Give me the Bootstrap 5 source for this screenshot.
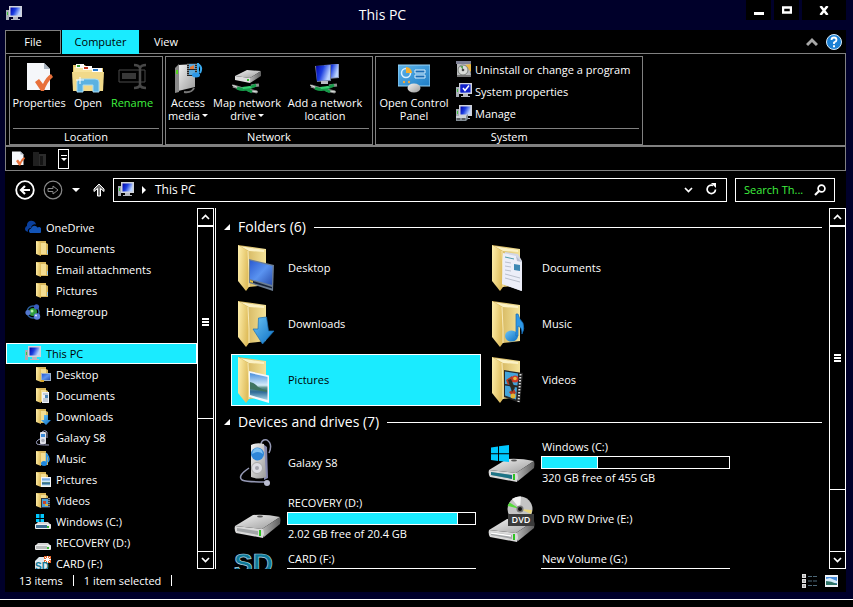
<!DOCTYPE html>
<html lang="en">
<head>
<meta charset="utf-8">
<meta name="viewport" content="width=device-width, initial-scale=1">
<title>This PC</title>
<link href="https://cdn.jsdelivr.net/npm/bootstrap@5.3.0/dist/css/bootstrap.min.css" rel="stylesheet">
<style>
:root { --hc-cyan:#1aebff; --hc-green:#3ff23f; --hc-gray:#808080; --hc-navy:#00002a; }
body { background:#000; color:#fff; font-family:"Open Sans","Noto Sans",sans-serif; font-size:11px; line-height:16px; }
svg { display:block; flex:none; }
a { color:inherit; text-decoration:none; }
.btn { --bs-btn-padding-x:0; --bs-btn-padding-y:0; --bs-btn-font-size:11px; --bs-btn-line-height:13px; --bs-btn-color:#fff; --bs-btn-hover-color:var(--hc-cyan); --bs-btn-border-width:0; --bs-btn-border-radius:0; --bs-btn-active-color:var(--hc-cyan); }
.i16 { width:16px; height:16px; }
.i32 { width:32px; height:32px; }
.i48 { width:48px; height:48px; }
.window-frame { background:var(--hc-navy); padding:0 7px 7px 5px; border-bottom:1px solid #fff; margin-bottom:7px; }
.title-bar { height:30px; }
.title-icon { margin:6px 0 0 1px; }
.title-text { font-size:14px; }
.caption-btn.btn { background:#000; width:25px; height:20px; margin-left:3px; display:flex; align-items:center; justify-content:center; }
.caption-btn.caption-close { width:44px; }
.tab-strip { height:24px; background:#000; }
.tab-strip .btn { height:24px; padding:0 15px; line-height:22px; }
.tab-strip .file-tab { border:1px solid var(--hc-gray); width:56px; }
.tab-strip .on-tab { background:var(--hc-cyan); color:#000; width:77px; padding:0; margin-left:1px; }
.tab-rest { border-bottom:1px solid var(--hc-gray); }
.ribbon { background:#000; border:1px solid var(--hc-gray); border-top:0; border-bottom-width:2px; padding:2px 3px 0; }
.ribbon-group { border:1px solid var(--hc-gray); padding:1px 2px 0; margin-right:2px; }
.ribbon-body { height:70px; gap:2px; padding-right:6px; }
.ribbon-caption { border-top:1px solid var(--hc-gray); line-height:15px; text-align:center; margin:0 1px; }
.big-cmd.btn { display:flex; flex-direction:column; align-items:center; width:54px; white-space:nowrap; padding-top:4px; }
.big-cmd svg { margin-bottom:2px; }
.w-media.btn { width:40px; } .w-map.btn { width:74px; } .w-add.btn { width:78px; } .w-panel.btn { width:72px; } .w-open.btn { width:40px; } .w-ren.btn { width:44px; }
.dim-cmd.btn { color:var(--hc-green); }
.small-cmd.btn { display:flex; align-items:center; gap:3px; height:22px; white-space:nowrap; }
.caret-dn { display:inline-block; border:3px solid transparent; border-top-color:currentColor; border-bottom:0; vertical-align:3px; margin-left:2px; }
.quick-bar { background:#000; border:1px solid var(--hc-gray); border-top:0; height:24px; padding:0 4px; gap:6px; }
.quick-drop.btn { border:1px solid #fff; width:11px; height:20px; margin-left:4px; display:flex; align-items:center; justify-content:center; }
.nav-row { background:#000; height:37px; padding:0 11px 0 10px; }
.field-box { border:1px solid #fff; height:24px; background:#000; }
.address-text { font-size:12px; }
.search-box { width:100px; padding:0 8px; }
.search-box input { min-width:0; width:70px; background:none; border:0; color:var(--hc-green); padding:0; outline:0; }
.search-box input::placeholder { color:var(--hc-green); opacity:1; }
.panes { background:#000; flex:1 1 0; min-height:0; }
.tree-pane { width:192px; overflow:hidden; padding:9px 0 0 1px; }
.tree-pane .list-group-item { background:none; color:#fff; border:1px solid transparent; border-radius:0; height:21px; padding:0 0 0 18px; gap:5px; display:flex; align-items:center; white-space:nowrap; flex:none; }
.tree-pane .tree-sub { padding-left:28px; }
.tree-pane .tree-gap { height:21px; }
.tree-pane .tree-on { background:var(--hc-cyan); color:#000; border-color:#fff; }
.scroller { width:17px; border:1px solid #fff; }
.scroller .btn { height:16px; display:flex; align-items:center; justify-content:center; }
.scroll-thumb { border:solid #fff; border-width:2px 0 1px; display:flex; align-items:center; justify-content:center; }
.scroll-room { border-bottom:1px solid #fff; }
.tree-scroll .scroll-thumb { flex:59; } .tree-scroll .scroll-room { flex:41; }
.file-scroll .scroll-thumb { flex:81; } .file-scroll .scroll-room { flex:19; }
.file-pane { border-left:1px solid #fff; margin-left:1px; min-width:0; overflow:hidden; padding:7px 7px 0 8px; }
.group-head { font-size:14px; line-height:24px; gap:8px; margin:0; font-weight:400; }
.group-head::after { content:""; flex:1; height:1px; background:#fff; }
.tile-set { display:flex; flex-wrap:wrap; gap:4px; padding:3px 0 4px 7px; }
.file-tile { width:250px; height:52px; border:1px solid transparent; padding:1px 4px 1px 1px; display:flex; align-items:center; gap:6px; }
.tile-on { background:var(--hc-cyan); border-color:#fff; color:#000; }
.tile-info { flex:1; min-width:0; line-height:15px; margin-bottom:2px; }
.tile-info > span { padding-left:1px; }
.tile-info .progress { --bs-progress-height:13px; --bs-progress-bg:#000; --bs-progress-border-radius:0; border:1px solid #fff; margin:2px 0 1px; }
.tile-info .progress-bar { background:var(--hc-cyan); border-right:1px solid #fff; }
.status-bar { background:#000; height:23px; padding:0 8px 0 14px; }
.status-bar .status-cell { border-right:1px solid #fff; line-height:11px; padding-right:10px; margin-right:10px; }
</style>
<script src="https://cdn.jsdelivr.net/npm/bootstrap@5.3.0/dist/js/bootstrap.bundle.min.js"></script>
</head>
<body>
<svg class="position-absolute" width="0" height="0" aria-hidden="true">
<defs>
<linearGradient id="gFlap" x1="0" x2="1" y2=".3"><stop offset="0" stop-color="#fff0ae"/><stop offset="1" stop-color="#dfbd5c"/></linearGradient>
<linearGradient id="gBack" x1="0" x2="1"><stop offset="0" stop-color="#c9a548"/><stop offset="1" stop-color="#f4e39a"/></linearGradient>
<linearGradient id="gBlue" x1="0" y1="0" x2="1" y2="1"><stop offset="0" stop-color="#2c5bd0"/><stop offset=".5" stop-color="#5a93f0"/><stop offset="1" stop-color="#2a4fae"/></linearGradient>
<linearGradient id="gArrow" x1="0" x2="1" y2="1"><stop offset="0" stop-color="#6cc4f5"/><stop offset="1" stop-color="#0b6fc4"/></linearGradient>
<linearGradient id="gScreen" x1="0" x2="1" y2=".4"><stop offset="0" stop-color="#0000a8"/><stop offset=".5" stop-color="#1c3fe0"/><stop offset="1" stop-color="#b9d2ff"/></linearGradient>
<linearGradient id="gMetal" x1="0" x2="1" y2="1"><stop offset="0" stop-color="#f4f4f4"/><stop offset="1" stop-color="#9b9b9b"/></linearGradient>
<linearGradient id="gSide" x1="0" x2="1"><stop offset="0" stop-color="#b8b8b8"/><stop offset="1" stop-color="#5e5e5e"/></linearGradient>
<linearGradient id="gPhoto" x2="0" y2="1"><stop offset="0" stop-color="#4a8edc"/><stop offset=".45" stop-color="#d4ecfa"/><stop offset=".55" stop-color="#5d8f88"/><stop offset=".7" stop-color="#2d6a96"/><stop offset="1" stop-color="#a8d4e6"/></linearGradient>
<linearGradient id="gPanel" x1="0" x2="1" y2="1"><stop offset="0" stop-color="#5fb6ec"/><stop offset="1" stop-color="#1e7cc4"/></linearGradient>
</defs>
<symbol id="pc" viewBox="0 0 16 16"><path d="M0 4h3v10H0z" fill="#a8aeb8"/><path d="M1 6h1v3H1z" fill="#3fc43f"/><path d="M3 0h13v11H3z" fill="#d0d3da"/><path d="M4.500 1.500h10v8h-10z" fill="url(#gScreen)"/><path d="M7 11h5v2h2v1H5v-1h2z" fill="#b7bac2"/></symbol>
<symbol id="sheet" viewBox="0 0 32 32"><path d="M4 1h17l6 6v21H4z" fill="#f5f7fa"/><path d="M21 1v6h6z" fill="#a9b4c0"/><path d="M12 20l4-3 4 5q3-7 8-10l2 3q-6 5-9 14h-3z" fill="#e8703a"/></symbol>
<symbol id="openf" viewBox="0 0 32 32"><path d="M1 3h12l2 3h16v23H1z" fill="#e4c76a"/><path d="M2 5h10l2 2h8l1 2h8v19H2z" fill="#f8e49c"/><path d="M4 2h8v4H4z" fill="#fff"/><path d="M5 3h3v2H5z" fill="#3ca03c"/><path d="M11 4h9v4h-9z" fill="#fff"/><path d="M12 5h4v2h-4z" fill="#c83a20"/><path d="M20 6h10v4H20z" fill="#fff"/><path d="M21 7h5v2h-5z" fill="#2878c8"/><path d="M0 10h32l-1 19H1z" fill="#f1d98a"/><path d="M5 30V20q0-3 4-3h14q4 0 4 3v10h-6v-7H11v7z" fill="#5bb2e2" stroke="#a8dbf5"/><path d="M8 15v7M4 18h8" stroke="#fff"/></symbol>
<symbol id="rename" viewBox="0 0 32 32"><path d="M3 8h26v12H3z" fill="none" stroke="#4a4a4a"/><path d="M6 11h14v6H6z" fill="#383838"/><path d="M18 3q5 0 6 3 1-3 6-3M24 5v20M18 26q5 0 6-3 1 3 6 3" fill="none" stroke="#484848" stroke-width="2.500"/></symbol>
<symbol id="media" viewBox="0 0 32 32"><path d="M6 3l17-1v23L6 29z" fill="url(#gMetal)"/><path d="M3 6l4-4v28l-4 1z" fill="#8a8a8a"/><path d="M4 8h2v4H4z" fill="#56d420"/><path d="M12 30q8 1 10-4" fill="none" stroke="#777" stroke-width="2"/><path d="M15 1h10v13H15z" fill="#222"/><path d="M17 2h6v5h-6zM17 8h6v5h-6z" fill="#5aa9dd"/><path d="M18 5l4-2v4h-4z" fill="#e27a3c"/><path d="M16 2v12M24 2v12" stroke="#ddd" stroke-dasharray="1 1"/><path d="M26 1v11M26 2q5 3 2 9" fill="none" stroke="#3aa9ee" stroke-width="2"/><ellipse cx="24" cy="13" rx="4" ry="2.500" fill="#2c98e8"/></symbol>
<symbol id="cable" viewBox="0 0 32 32"><path d="M2 24l10 3M20 24l8-1M17 28l9 2" stroke="#8e9290" stroke-width="3"/><path d="M1 23l7 3M20 29l7 1" stroke="#d9dbda"/><path d="M6 26q7 3 12 0l7-3M13 26l8 4" fill="none" stroke="#159a48" stroke-width="3"/><path d="M11 25l8-1 2 2-9 1z" fill="#35d070"/></symbol>
<symbol id="mapdrive" viewBox="0 0 32 32"><use href="#cable"/><path d="M4 14l12-6 14 1-11 7z" fill="url(#gMetal)"/><path d="M4 14l15 2v5L4 18z" fill="#dedede"/><path d="M19 16l11-7v5l-11 7z" fill="url(#gSide)"/><path d="M16 17h2v2h-2z" fill="#38c030"/></symbol>
<symbol id="addnet" viewBox="0 0 32 32"><use href="#cable"/><path d="M15 3l15-1v14l-12 1z" fill="#8e98b8"/><path d="M17 3l12-1v13l-10 1z" fill="url(#gScreen)"/><path d="M6 4l16-1v16l-14 1z" fill="#7680a0"/><path d="M7 4l14-1v15l-13 1z" fill="url(#gScreen)"/><path d="M12 19h7v3h-7z" fill="#b8bbc2"/></symbol>
<symbol id="cpanel" viewBox="0 0 32 32"><path d="M0 3h32v21H0z" fill="url(#gPanel)" stroke="#9bd4f6"/><circle cx="8" cy="11" r="4.500" fill="none" stroke="#d8f0ff" stroke-width="1.500"/><path d="M8 11V5a6 6 0 0 1 6 6z" fill="#f5b030"/><path d="M17 8h10v3H17zM17 13h10v3H17z" fill="#1b6cb4" stroke="#d8f0ff"/><circle cx="6" cy="20" r="1.200" fill="#f6a83c"/><circle cx="11" cy="20" r="1.200" fill="#f6a83c"/><ellipse cx="16" cy="26" rx="6.500" ry="4.500" fill="url(#gMetal)"/></symbol>
<symbol id="uninst" viewBox="0 0 16 16"><path d="M1 2h13l1 13H1z" fill="#b9bbbd"/><path d="M0 0h15v3H0z" fill="#7d8094"/><path d="M9 4l6-1v8z" fill="#e8b742"/><circle cx="7" cy="9" r="5" fill="#d9dcd9" stroke="#7c807c"/><path d="M7 9l-3-4h3z" fill="#58a058"/><circle cx="7" cy="9" r="1.300" fill="#444"/><path d="M1 14h14v2H1z" fill="#777"/></symbol>
<symbol id="sysprop" viewBox="0 0 16 16"><use href="#pc"/><path d="M4.500 1.500h10v8h-10z" fill="#1020c8"/><path d="M7 5l2 2.500 4-5" fill="none" stroke="#fff" stroke-width="1.500"/></symbol>
<symbol id="manage" viewBox="0 0 16 16"><use href="#pc"/><path d="M0 11h10l2-2v5l-2 2H0z" fill="#838d95"/><path d="M0 11h10v2H0z" fill="#cdd3d8"/><path d="M1 14h3M6 14h3" stroke="#333"/></symbol>
<symbol id="gray-folder" viewBox="0 0 16 16"><path d="M1 1h6v14H1z" fill="#202020"/><path d="M7 3h7v12H7z" fill="#2c2c2c"/><path d="M8 5h3v9H8z" fill="#151515"/></symbol>
<symbol id="sfolder" viewBox="0 0 16 16"><path d="M1 0h10v2l2 1v11H5z" fill="#d8b65a"/><path d="M6 2h5v11H6z" fill="#f3dd92"/><path d="M1 0l5 2v13l-5-2z" fill="url(#gFlap)"/></symbol>
<symbol id="f-plain" viewBox="0 0 16 16"><use href="#sfolder"/><path d="M12 9h1v4h-1z" fill="#8fc8ef"/></symbol>
<symbol id="f-desk" viewBox="0 0 16 16"><use href="#sfolder"/><path d="M6 6h10v8H6z" fill="#9fb2c8"/><path d="M7 7h8v6H7z" fill="url(#gBlue)"/><path d="M6 13h3v2H6z" fill="#d4a52e"/></symbol>
<symbol id="f-docs" viewBox="0 0 16 16"><use href="#sfolder"/><path d="M7 4h7v11H7z" fill="#eef2f8"/><path d="M8 6h5M8 11h5M8 13h5" stroke="#9aa6b8"/><path d="M10 7h3v3h-3z" fill="#4a86b8"/></symbol>
<symbol id="f-down" viewBox="0 0 16 16"><use href="#sfolder"/><path d="M9 6h4v5h3l-5 5-5-5h3z" fill="url(#gArrow)"/></symbol>
<symbol id="f-music" viewBox="0 0 16 16"><use href="#sfolder"/><ellipse cx="9" cy="12.500" rx="3" ry="2.500" fill="#1e88e0"/><path d="M11.500 13V3q4 4 1.500 8" fill="none" stroke="#2a94e8" stroke-width="1.500"/></symbol>
<symbol id="f-pics" viewBox="0 0 16 16"><use href="#sfolder"/><path d="M6 5h10v10H6z" fill="#f4f6f8"/><path d="M7 6.500h8v7H7z" fill="url(#gPhoto)"/></symbol>
<symbol id="f-vids" viewBox="0 0 16 16"><use href="#sfolder"/><path d="M6 5h9v10H6z" fill="#2a3440"/><path d="M7 6h6v8H7z" fill="#4aa0d8"/><path d="M8 8h3v3H8z" fill="#c8452c"/><path d="M10 11h3v2h-3z" fill="#e0b23a"/><path d="M14 5v10" stroke="#ccc" stroke-dasharray="1 1"/></symbol>
<symbol id="cloud" viewBox="0 0 16 16"><path d="M1 11a3 3 0 0 1 1-5 4.500 4.500 0 0 1 9-1.500A4 4 0 0 0 6 8a3 3 0 0 0-3 4z" fill="#0a3f9c"/><path d="M5 13a2.500 2.500 0 0 1 1-4.500 3.500 3.500 0 0 1 6.500-1A3 3 0 0 1 15 13z" fill="#1254b8"/></symbol>
<symbol id="homegrp" viewBox="0 0 16 16"><circle cx="8" cy="8" r="6" fill="none" stroke="#2b5d9a" stroke-width="1.500"/><circle cx="8" cy="8" r="4" fill="#2e9b3c"/><circle cx="7" cy="7" r="1.500" fill="#b3efa9"/><circle cx="3" cy="8.500" r="2.600" fill="#5377cf"/><circle cx="11.500" cy="2.800" r="2.600" fill="#3a5fc0"/><circle cx="12" cy="12.500" r="3.200" fill="#5f82dc"/><circle cx="11" cy="11.500" r="1" fill="#dfe8ff"/></symbol>
<symbol id="sphone" viewBox="0 0 16 16"><path d="M7 2q3-3 5 0v6M5 9q-5 2-3 5 2 1 12 1" fill="none" stroke="#a3a7c8"/><rect x="5" y="2" width="6" height="12" rx="1" fill="#dfe1ea"/><path d="M6 4h4v3H6z" fill="#3a8ad8"/><circle cx="8" cy="10.500" r="1.800" fill="#a9adb8"/></symbol>
<symbol id="sdrive" viewBox="0 0 16 16"><path d="M0 11l3-3h10l3 3z" fill="#d6d6d6"/><rect y="10" width="16" height="5" rx="1" fill="#eee"/><path d="M1 11h11v3H1z" fill="#b9bcbc"/><path d="M12 12h2v2h-2z" fill="#35b92e"/></symbol>
<symbol id="swin" viewBox="0 0 16 16"><use href="#sdrive"/><path d="M1 11h11v3H1z" fill="#3c6c90"/><path d="M1 0h3.500v4H1zM5.500 0H9v4H5.500zM1 5h3.500v3H1zM5.500 5H9v3H5.500z" fill="#00c8ff"/></symbol>
<symbol id="bfolder" viewBox="0 0 48 48"><path d="M5 1l28 4v36l-17 2-6-8z" fill="url(#gBack)"/><path d="M7 2l24 4v2L16 7z" fill="#fbf1c4"/><path d="M5 1l10 6 1 22v14l-3 4-8-10z" fill="url(#gFlap)"/><path d="M15 7l1 22v14" fill="none" stroke="#fff6cf" stroke-width=".8"/></symbol>
<symbol id="b-desk" viewBox="0 0 48 48"><use href="#bfolder"/><path d="M16 15l25 6-1 26-24-8z" fill="#6c7d92"/><path d="M17 16.500l22.500 5.500-.5 19L17 35z" fill="url(#gBlue)"/><path d="M17 36l22 7v1.500L17 38z" fill="#17243a"/><path d="M17 36l3 1v2l-3-1z" fill="#e2bf3c"/></symbol>
<symbol id="b-docs" viewBox="0 0 48 48"><use href="#bfolder"/><path d="M18 8l13 2 4 7-.5 30L15 40z" fill="#d3d7e6"/><path d="M16 9l13 3 6 6V47l-20-7z" fill="#eceef8"/><path d="M29 12l6 6-5-1z" fill="#b9c0d2"/><path d="M18 13l9 2" stroke="#4a9aa8"/><path d="M18 18l6 1M18 22l6 1M18 26l6 1M18 30l15 4M18 34l15 4" stroke="#b9bfcc"/><path d="M27 20l6 1v6l-6-1z" fill="#3d88b4"/></symbol>
<symbol id="b-down" viewBox="0 0 48 48"><use href="#bfolder"/><path d="M25.500 18l8-1 2 14H41L29.500 44 20 29h5z" fill="url(#gArrow)" stroke="#1a70b4" stroke-width=".7"/></symbol>
<symbol id="b-music" viewBox="0 0 48 48"><use href="#bfolder"/><ellipse cx="24.500" cy="36" rx="6.500" ry="5.500" fill="url(#gArrow)"/><path d="M29 36V14h2q1 5 5 9 2 6-1 11 0-7-4-8v10z" fill="#2e98e6" stroke="#1568b2" stroke-width=".7"/></symbol>
<symbol id="b-pics" viewBox="0 0 48 48"><use href="#bfolder"/><path d="M16 15l20 4.500V47l-20-6z" fill="#f4f7fa"/><path d="M17 17l17.500 4v23L17 39z" fill="url(#gPhoto)"/><path d="M17 26q5 1 8 5 5 3 9 3v2l-17-3z" fill="#3f7461"/></symbol>
<symbol id="b-vids" viewBox="0 0 48 48"><use href="#bfolder"/><path d="M17 14l19 3-3 30-16-6z" fill="#262626"/><path d="M18 15.500l13 2-.5 12L18 28zM18 29.500l12 2-1 12-11-4z" fill="#44a4da"/><circle cx="28" cy="23" r="3.500" fill="#cf3a28"/><circle cx="28" cy="22.500" r="1.800" fill="#e9b93c"/><path d="M19 24l6-4 1 6-5 3zM22 36l5-3 2 4-4 3z" fill="#b53a22"/><path d="M21 24l3-1 4 9-3 4z" fill="#2a2a20"/><circle cx="26" cy="40" r="2.500" fill="#e6b534"/><path d="M33.500 18l-2 28" stroke="#ddd" stroke-width="2" stroke-dasharray="1.500 1.500"/></symbol>
<symbol id="b-phone" viewBox="0 0 48 48"><path d="M28 5q1-5 6-4 6 4 2 13M16 29q-12 8-7 12 5 2 23 2" fill="none" stroke="#9498b4" stroke-width="1.500"/><path d="M30 5l4 3 1 31-4 2z" fill="#8589b0"/><path d="M18 6q6-3 13-1l2 33q-7 3-15 0z" fill="url(#gMetal)"/><ellipse cx="24.500" cy="15" rx="6.500" ry="6.500" fill="#2e86d8"/><path d="M19 15q6-4 11 0-1-6-5.500-6T19 15z" fill="#7fc1f2"/><circle cx="24" cy="29" r="5.500" fill="#dcdde4" stroke="#aaa"/><circle cx="24" cy="29" r="2" fill="#a2a4ae"/><circle cx="34" cy="44" r="3" fill="#b9bcd0"/></symbol>
<symbol id="bdrive" viewBox="0 0 48 48"><path d="M2 31l18-11q13-1 27 2l-18 12z" fill="url(#gMetal)"/><path d="M29 34l18-12q1 3 0 7L31 42z" fill="url(#gSide)"/><path d="M2 31q-1 4 1 7l27 5q2-4 0-9z" fill="#d9d9d9"/><path d="M4 33l21 3v4L4 36z" fill="#a2a5a7"/><path d="M26 35h2v6h-2z" fill="#2ec322"/><ellipse cx="27" cy="21.500" rx="3" ry="1" fill="#555"/></symbol>
<symbol id="b-win" viewBox="0 0 48 48"><use href="#bdrive"/><path d="M4 33l21 3v4L4 36z" fill="#1d7486"/><path d="M4 8.500l7-1v6.800H4zM12 7.300L22 6v8.300H12zM4 15.300h7V22l-7-1zM12 15.300h10V23l-10-1z" fill="#00c8ff"/></symbol>
<symbol id="b-dvd" viewBox="0 0 48 48"><g transform="translate(0 4)"><use href="#bdrive" width="48" height="48"/></g><path d="M4 38l20 3" stroke="#fff" stroke-width="1.500"/><circle cx="33" cy="14" r="12.500" fill="#c4c4c4"/><path d="M33 14L25 4a13 13 0 0 1 9-2.500z" fill="#f3f3f3"/><path d="M33 14L20.500 11l2-3.500z" fill="#56dc3c"/><path d="M33 14l11 5 1-4z" fill="#ead77c"/><circle cx="33" cy="14" r="3.500" fill="#777"/><circle cx="33" cy="14" r="2" fill="#111"/><path d="M21 19h26v12H21z" fill="#3a3a3a"/></symbol>
<symbol id="up" viewBox="0 0 9 6"><path d="M1 5l3.500-3.500L8 5" fill="none" stroke="#fff" stroke-width="1.700"/></symbol>
<symbol id="down" viewBox="0 0 9 6"><path d="M1 1l3.500 3.500L8 1" fill="none" stroke="#fff" stroke-width="1.700"/></symbol>
<symbol id="grip" viewBox="0 0 7 8"><path d="M0 1h7M0 4h7M0 7h7" stroke="#fff" stroke-width="2"/></symbol>
<symbol id="tri" viewBox="0 0 6 6"><path d="M6 0v6H0z" fill="#fff"/></symbol>
</svg>

<div class="d-flex flex-column vh-100">
<div class="window-frame d-flex flex-column flex-grow-1 overflow-hidden">
  <header class="title-bar d-flex">
    <svg class="i16 title-icon" aria-hidden="true"><use href="#pc"/></svg>
    <div class="title-text flex-grow-1 text-center align-self-center">This PC</div>
    <button class="btn caption-btn" aria-label="Minimize"><svg width="10" height="10"><path d="M0 7h10v3H0z" fill="#fff"/></svg></button>
    <button class="btn caption-btn" aria-label="Maximize"><svg width="10" height="8"><path d="M1 1.500h8v5H1z" fill="none" stroke="#fff" stroke-width="2.500"/></svg></button>
    <button class="btn caption-btn caption-close" aria-label="Close"><svg width="10" height="9"><path d="M1.500 0l7 9M8.500 0l-7 9" stroke="#fff" stroke-width="2.500"/></svg></button>
  </header>

  <nav class="tab-strip d-flex" aria-label="Ribbon tabs">
    <button class="btn file-tab">File</button>
    <button class="btn on-tab">Computer</button>
    <div class="tab-rest flex-grow-1 d-flex align-items-center">
      <button class="btn">View</button>
      <button class="btn ms-auto p-0 me-2" aria-label="Collapse ribbon"><svg width="12" height="10"><path d="M1 8l5-5 5 5" fill="none" stroke="#a8a8a8" stroke-width="3"/></svg></button>
      <button class="btn p-0 me-1" aria-label="Help"><svg width="16" height="16"><circle cx="8" cy="8" r="7.500" fill="#1c80d4" stroke="#d8ecfa"/><path d="M5.500 6q0-2.500 2.500-2.500T10.500 6Q10.500 7.500 8 8.500V10" fill="none" stroke="#fff" stroke-width="1.800"/><path d="M7 11.200h2v2H7z" fill="#fff"/></svg></button>
    </div>
  </nav>

  <section class="ribbon d-flex" aria-label="Computer">
    <div class="ribbon-group">
      <div class="ribbon-body d-flex align-items-start">
        <button class="btn big-cmd"><svg class="i32"><use href="#sheet"/></svg>Properties</button>
        <button class="btn big-cmd w-open"><svg class="i32"><use href="#openf"/></svg>Open</button>
        <button class="btn big-cmd w-ren dim-cmd"><svg class="i32"><use href="#rename"/></svg>Rename</button>
      </div>
      <div class="ribbon-caption">Location</div>
    </div>
    <div class="ribbon-group">
      <div class="ribbon-body d-flex align-items-start">
        <button class="btn big-cmd w-media"><svg class="i32"><use href="#media"/></svg>Access<span>media<span class="caret-dn"></span></span></button>
        <button class="btn big-cmd w-map"><svg class="i32"><use href="#mapdrive"/></svg>Map network<span>drive<span class="caret-dn"></span></span></button>
        <button class="btn big-cmd w-add"><svg class="i32"><use href="#addnet"/></svg>Add a network<span>location</span></button>
      </div>
      <div class="ribbon-caption">Network</div>
    </div>
    <div class="ribbon-group">
      <div class="ribbon-body d-flex align-items-start">
        <button class="btn big-cmd w-panel"><svg class="i32"><use href="#cpanel"/></svg>Open Control<span>Panel</span></button>
        <div class="mx-1">
          <button class="btn small-cmd"><svg class="i16"><use href="#uninst"/></svg>Uninstall or change a program</button>
          <button class="btn small-cmd"><svg class="i16"><use href="#sysprop"/></svg>System properties</button>
          <button class="btn small-cmd"><svg class="i16"><use href="#manage"/></svg>Manage</button>
        </div>
      </div>
      <div class="ribbon-caption">System</div>
    </div>
  </section>

  <div class="quick-bar d-flex align-items-center">
    <button class="btn" aria-label="Properties"><svg class="i16"><use href="#sheet"/></svg></button>
    <button class="btn" aria-label="New folder"><svg class="i16"><use href="#gray-folder"/></svg></button>
    <button class="btn quick-drop" aria-label="Customize toolbar"><svg width="6" height="7"><path d="M0 0h6v1H0zM0 3h6L3 6z" fill="#fff"/></svg></button>
  </div>

  <div class="nav-row d-flex align-items-center">
    <button class="btn" aria-label="Back"><svg width="20" height="20"><circle cx="10" cy="10" r="8.800" fill="none" stroke="#fff" stroke-width="1.800"/><path d="M15 10H6M10 6l-4 4 4 4" fill="none" stroke="#fff" stroke-width="2.200"/></svg></button>
    <button class="btn ms-2" aria-label="Forward"><svg width="20" height="20"><circle cx="10" cy="10" r="8.800" fill="none" stroke="#8a8a8a" stroke-width="1.200"/><path d="M5 8.500h5V6l5 4-5 4v-2.500H5z" fill="none" stroke="#8a8a8a"/></svg></button>
    <button class="btn ms-2" aria-label="Recent locations"><svg width="10" height="6"><path d="M1 1h8L5 5z" fill="#fff"/></svg></button>
    <button class="btn ms-2 me-1" aria-label="Up"><svg class="mx-1" width="12" height="14"><path d="M6 1L1 6v2.500l3.500-3V13h3V5.500l3.500 3V6z" fill="#777" stroke="#fff"/></svg></button>
    <div class="field-box flex-grow-1 d-flex align-items-center px-1">
      <svg class="i16" aria-hidden="true"><use href="#pc"/></svg>
      <svg class="mx-2" width="5" height="8" aria-hidden="true"><path d="M0 0l4 4-4 4z" fill="#fff"/></svg>
      <a href="#" class="address-text flex-grow-1">This PC</a>
      <button class="btn me-2" aria-label="Address history"><svg width="9" height="6"><use href="#down"/></svg></button>
      <button class="btn me-1 ms-1" aria-label="Refresh"><svg width="13" height="13"><path d="M8 2.500a4.200 4.200 0 1 0 2.500 4" fill="none" stroke="#fff" stroke-width="1.700"/><path d="M6 0h5v5z" fill="#fff"/></svg></button>
    </div>
    <div class="field-box search-box d-flex align-items-center justify-content-between ms-2">
      <input type="text" aria-label="Search This PC" placeholder="Search Th...">
      <button class="btn" aria-label="Search"><svg width="12" height="12"><circle cx="7.500" cy="4.500" r="3.400" fill="none" stroke="#fff" stroke-width="1.700"/><path d="M5 7l-4 4" stroke="#fff" stroke-width="2.200"/></svg></button>
    </div>
  </div>

  <main class="panes d-flex">
    <nav class="tree-pane list-group rounded-0 flex-shrink-0" aria-label="Folders">
      <a href="#" class="list-group-item"><svg class="i16"><use href="#cloud"/></svg>OneDrive</a>
      <a href="#" class="list-group-item tree-sub"><svg class="i16"><use href="#f-plain"/></svg>Documents</a>
      <a href="#" class="list-group-item tree-sub"><svg class="i16"><use href="#f-plain"/></svg>Email attachments</a>
      <a href="#" class="list-group-item tree-sub"><svg class="i16"><use href="#f-plain"/></svg>Pictures</a>
      <a href="#" class="list-group-item"><svg class="i16"><use href="#homegrp"/></svg>Homegroup</a>
      <div class="tree-gap flex-shrink-0"></div>
      <a href="#" class="list-group-item tree-on"><svg class="i16"><use href="#pc"/></svg>This PC</a>
      <a href="#" class="list-group-item tree-sub"><svg class="i16"><use href="#f-desk"/></svg>Desktop</a>
      <a href="#" class="list-group-item tree-sub"><svg class="i16"><use href="#f-docs"/></svg>Documents</a>
      <a href="#" class="list-group-item tree-sub"><svg class="i16"><use href="#f-down"/></svg>Downloads</a>
      <a href="#" class="list-group-item tree-sub"><svg class="i16"><use href="#sphone"/></svg>Galaxy S8</a>
      <a href="#" class="list-group-item tree-sub"><svg class="i16"><use href="#f-music"/></svg>Music</a>
      <a href="#" class="list-group-item tree-sub"><svg class="i16"><use href="#f-pics"/></svg>Pictures</a>
      <a href="#" class="list-group-item tree-sub"><svg class="i16"><use href="#f-vids"/></svg>Videos</a>
      <a href="#" class="list-group-item tree-sub"><svg class="i16"><use href="#swin"/></svg>Windows (C:)</a>
      <a href="#" class="list-group-item tree-sub"><svg class="i16"><use href="#sdrive"/></svg>RECOVERY (D:)</a>
      <a href="#" class="list-group-item tree-sub"><svg class="i16" viewBox="0 0 16 16"><path d="M0 5l4-4h9v14H0z" fill="#dfeaf0"/><path d="M9 0h7v7H9z" fill="#e8692c"/><path d="M9 3.500h7M12.500 0v7M10 1l5 5M15 1l-5 5" stroke="#fff"/><text x="0" y="14" font-family="Liberation Sans" font-weight="700" font-size="10" fill="#127a98">SD</text></svg>CARD (F:)</a>
    </nav>
    <div class="scroller tree-scroll d-flex flex-column flex-shrink-0">
      <button class="btn" aria-label="Scroll up"><svg width="9" height="6"><use href="#up"/></svg></button>
      <div class="scroll-thumb"><svg width="7" height="8"><use href="#grip"/></svg></div>
      <div class="scroll-room"></div>
      <button class="btn" aria-label="Scroll down"><svg width="9" height="6"><use href="#down"/></svg></button>
    </div>

    <div class="file-pane flex-grow-1">
      <h2 class="group-head d-flex align-items-center"><svg width="6" height="6"><use href="#tri"/></svg><span>Folders (6)</span></h2>
      <div class="tile-set">
        <a href="#" class="file-tile"><svg class="i48"><use href="#b-desk"/></svg><div class="tile-info"><span>Desktop</span></div></a>
        <a href="#" class="file-tile"><svg class="i48"><use href="#b-docs"/></svg><div class="tile-info"><span>Documents</span></div></a>
        <a href="#" class="file-tile"><svg class="i48"><use href="#b-down"/></svg><div class="tile-info"><span>Downloads</span></div></a>
        <a href="#" class="file-tile"><svg class="i48"><use href="#b-music"/></svg><div class="tile-info"><span>Music</span></div></a>
        <a href="#" class="file-tile tile-on"><svg class="i48"><use href="#b-pics"/></svg><div class="tile-info"><span>Pictures</span></div></a>
        <a href="#" class="file-tile"><svg class="i48"><use href="#b-vids"/></svg><div class="tile-info"><span>Videos</span></div></a>
      </div>
      <h2 class="group-head d-flex align-items-center"><svg width="6" height="6"><use href="#tri"/></svg><span>Devices and drives (7)</span></h2>
      <div class="tile-set">
        <a href="#" class="file-tile"><svg class="i48"><use href="#b-phone"/></svg><div class="tile-info"><span>Galaxy S8</span></div></a>
        <a href="#" class="file-tile"><svg class="i48"><use href="#b-win"/></svg><div class="tile-info"><span>Windows (C:)</span><div class="progress" role="progressbar" aria-label="Space used on C" aria-valuenow="30" aria-valuemin="0" aria-valuemax="100"><div class="progress-bar" style="width:30%"></div></div><span>320 GB free of 455 GB</span></div></a>
        <a href="#" class="file-tile"><svg class="i48"><use href="#bdrive"/></svg><div class="tile-info"><span>RECOVERY (D:)</span><div class="progress" role="progressbar" aria-label="Space used on D" aria-valuenow="91" aria-valuemin="0" aria-valuemax="100"><div class="progress-bar" style="width:91%"></div></div><span>2.02 GB free of 20.4 GB</span></div></a>
        <a href="#" class="file-tile"><svg class="i48" viewBox="0 0 48 48"><use href="#b-dvd"/><text x="34" y="28" text-anchor="middle" font-family="Open Sans" font-size="9" font-weight="600" fill="#fff">DVD</text></svg><div class="tile-info"><span>DVD RW Drive (E:)</span></div></a>
        <a href="#" class="file-tile"><svg class="i48" viewBox="0 0 48 48"><text x="1" y="22" font-family="Liberation Sans" font-weight="700" font-size="28" fill="#0d7898" stroke="#b4d6e2" stroke-width=".7">SD</text></svg><div class="tile-info"><span>CARD (F:)</span><div class="progress" role="progressbar" aria-label="Space used on F"></div><span>&nbsp;</span></div></a>
        <a href="#" class="file-tile"><svg class="i48"></svg><div class="tile-info"><span>New Volume (G:)</span><div class="progress" role="progressbar" aria-label="Space used on G"></div><span>&nbsp;</span></div></a>
      </div>
    </div>
    <div class="scroller file-scroll d-flex flex-column flex-shrink-0">
      <button class="btn" aria-label="Scroll up"><svg width="9" height="6"><use href="#up"/></svg></button>
      <div class="scroll-thumb"><svg width="7" height="8"><use href="#grip"/></svg></div>
      <div class="scroll-room"></div>
      <button class="btn" aria-label="Scroll down"><svg width="9" height="6"><use href="#down"/></svg></button>
    </div>
  </main>

  <footer class="status-bar d-flex align-items-center">
    <span class="status-cell">13 items</span>
    <span class="status-cell">1 item selected</span>
    <button class="btn ms-auto me-2" aria-label="Details view"><svg width="16" height="14"><path d="M1 0h4v4H1zM1 5h4v4H1zM1 10h4v4H1z" fill="#ddd"/><path d="M2.500 1.500h1v1h-1zM2.500 6.500h1v1h-1zM2.500 11.500h1v1h-1z" fill="#333"/><path d="M7 2.500h4M12 2.500h4M7 7h4M12 7h4M7 11.500h4M12 11.500h4" stroke="#4d6878"/></svg></button>
    <button class="btn" aria-label="Large icons view"><svg width="13" height="12"><path d="M0 0h13v12H0z" fill="#f2f6fa"/><path d="M1 2h11v8H1z" fill="#4a8edc"/><path d="M1 4l4-1 7 3v2H1z" fill="#d4ecfa"/><path d="M1 6q5 0 11 3v1H1z" fill="#2f7468"/></svg></button>
  </footer>
</div>
</div>
</body>
</html>
